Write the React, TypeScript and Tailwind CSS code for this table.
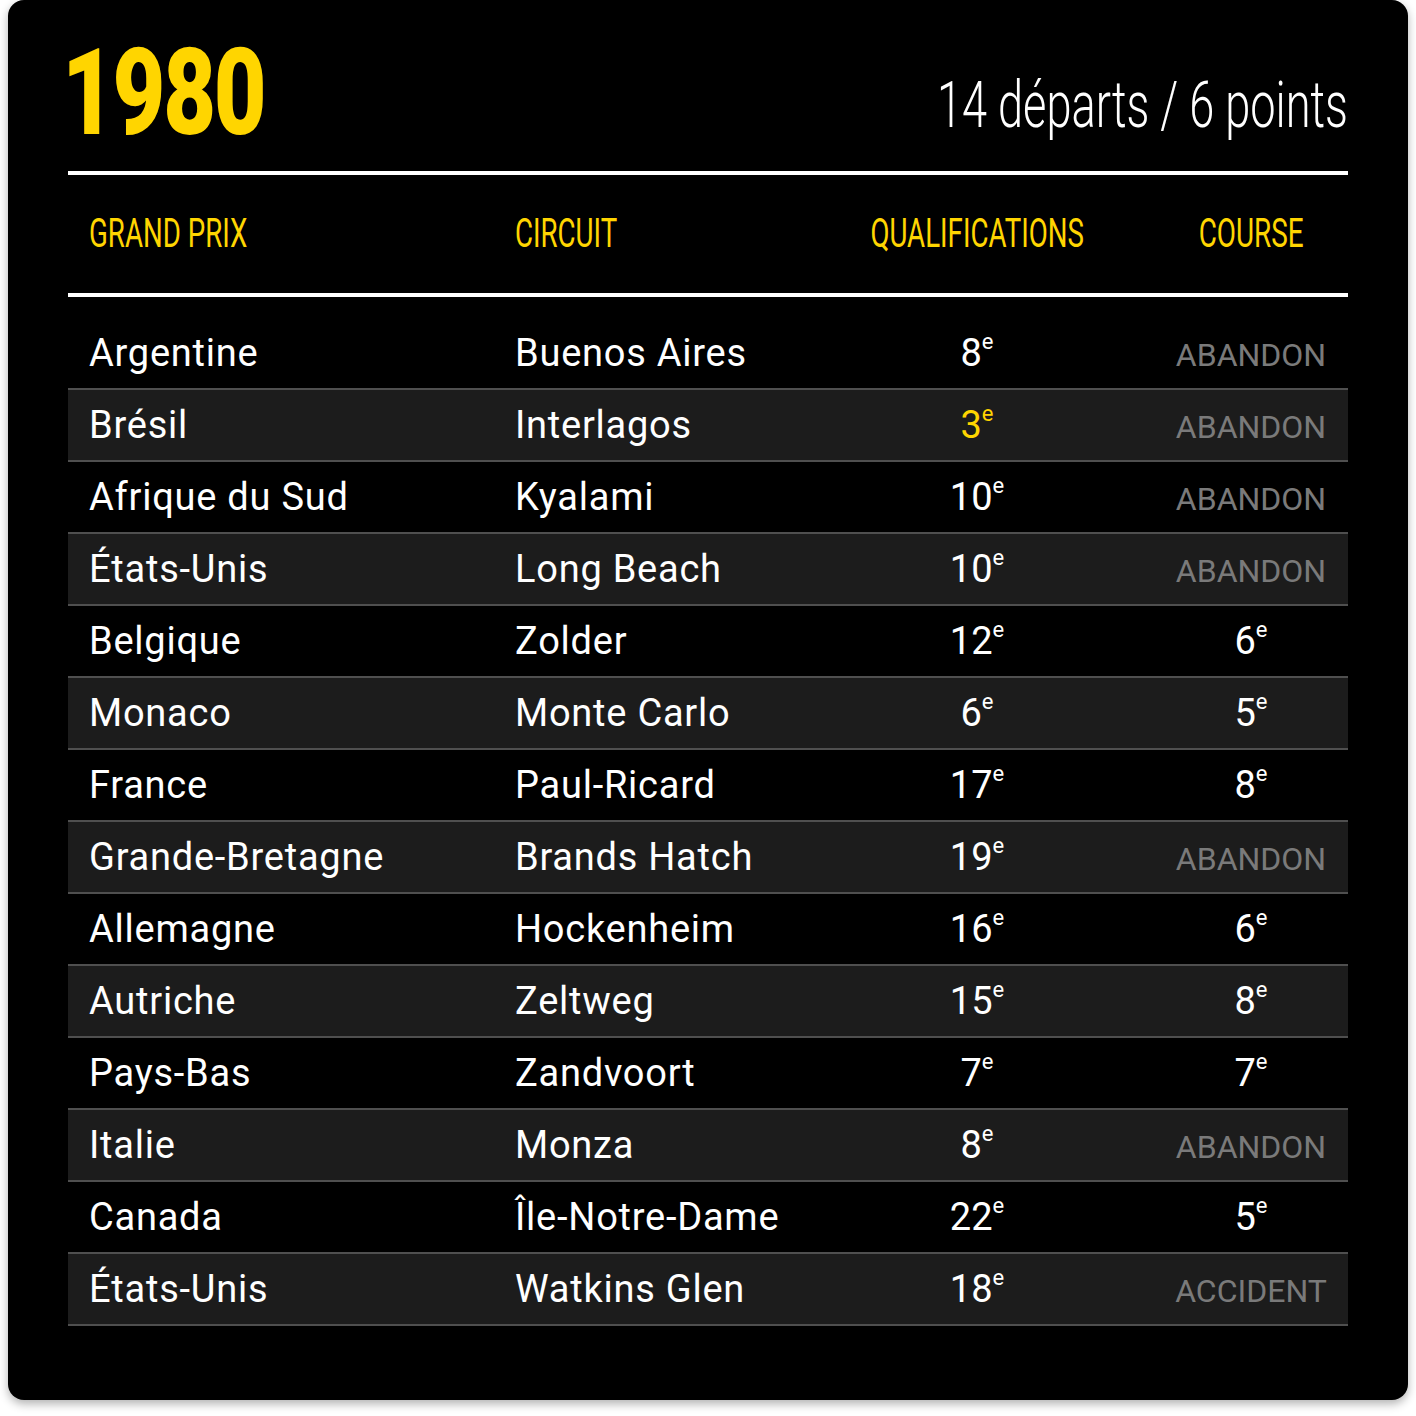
import React from "react";

type Row = { gp: string; circuit: string; quali: string; course: string; podium?: boolean };

const rows: Row[] = [
  { gp: "Argentine", circuit: "Buenos Aires", quali: "8", course: "ABANDON" },
  { gp: "Brésil", circuit: "Interlagos", quali: "3", course: "ABANDON", podium: true },
  { gp: "Afrique du Sud", circuit: "Kyalami", quali: "10", course: "ABANDON" },
  { gp: "États-Unis", circuit: "Long Beach", quali: "10", course: "ABANDON" },
  { gp: "Belgique", circuit: "Zolder", quali: "12", course: "6" },
  { gp: "Monaco", circuit: "Monte Carlo", quali: "6", course: "5" },
  { gp: "France", circuit: "Paul-Ricard", quali: "17", course: "8" },
  { gp: "Grande-Bretagne", circuit: "Brands Hatch", quali: "19", course: "ABANDON" },
  { gp: "Allemagne", circuit: "Hockenheim", quali: "16", course: "6" },
  { gp: "Autriche", circuit: "Zeltweg", quali: "15", course: "8" },
  { gp: "Pays-Bas", circuit: "Zandvoort", quali: "7", course: "7" },
  { gp: "Italie", circuit: "Monza", quali: "8", course: "ABANDON" },
  { gp: "Canada", circuit: "Île-Notre-Dame", quali: "22", course: "5" },
  { gp: "États-Unis", circuit: "Watkins Glen", quali: "18", course: "ACCIDENT" },
];

function Place({ n, yellow }: { n: string; yellow?: boolean }) {
  return (
    <span className={"tracking-normal " + (yellow ? "text-[#ffd500]" : "text-white")}>
      {n}
      <sup className="text-[22px] top-[-0.75em]">e</sup>
    </span>
  );
}

export default function App() {
  return (
    <div className="bg-white w-[1416px] h-[1416px] px-2 font-['Roboto',sans-serif]">
      <div className="w-[1400px] h-[1400px] bg-black rounded-2xl shadow-[0_4px_10px_rgba(0,0,0,0.3)] px-[60px]">
        {/* title */}
        <div className="h-[171px] flex items-start justify-between">
          <div className="mt-[33px] h-[120px] flex items-center -ml-[6px]">
            <span className="inline-block origin-left scale-x-[0.76] text-[120px] leading-none font-black text-[#ffd500] tracking-tight">
              1980
            </span>
          </div>
          <div className="mt-[71px] h-[70px] flex items-center">
            <span className="inline-block origin-right scale-x-[0.705] text-[64px] leading-none font-light text-white whitespace-nowrap">
              14 départs / 6 points
            </span>
          </div>
        </div>

        {/* table head */}
        <div className="border-y-4 border-white h-[126px] grid grid-cols-[426px_360px_246px_1fr] items-center text-[#ffd500] text-[41px] font-normal">
          <div className="pl-[21px]">
            <span className="inline-block origin-left scale-x-[0.675] whitespace-nowrap">GRAND PRIX</span>
          </div>
          <div className="pl-[21px]">
            <span className="inline-block origin-left scale-x-[0.675]">CIRCUIT</span>
          </div>
          <div className="flex justify-center">
            <span className="inline-block scale-x-[0.675] whitespace-nowrap">QUALIFICATIONS</span>
          </div>
          <div className="flex justify-center pl-[54px]">
            <span className="inline-block scale-x-[0.68]">COURSE</span>
          </div>
        </div>

        {/* table body */}
        <div className="pt-[21px]">
          {rows.map((r, i) => (
            <div
              key={i}
              className={
                "h-[72px] border-b-2 border-[#4f4f4f] grid grid-cols-[426px_360px_246px_1fr] items-center text-[38px] text-white tracking-[0.02em] " +
                (i % 2 === 1 ? "bg-[#1c1c1c]" : "bg-black")
              }
            >
              <div className="pl-[21px] whitespace-nowrap">{r.gp}</div>
              <div className="pl-[21px] whitespace-nowrap">{r.circuit}</div>
              <div className="text-center">
                <Place n={r.quali} yellow={r.podium} />
              </div>
              <div className="text-center pl-[54px]">
                {/^\d+$/.test(r.course) ? (
                  <Place n={r.course} />
                ) : (
                  <span className="text-[#7a7a7a] text-[32px] tracking-normal">{r.course}</span>
                )}
              </div>
            </div>
          ))}
        </div>
      </div>
    </div>
  );
}
